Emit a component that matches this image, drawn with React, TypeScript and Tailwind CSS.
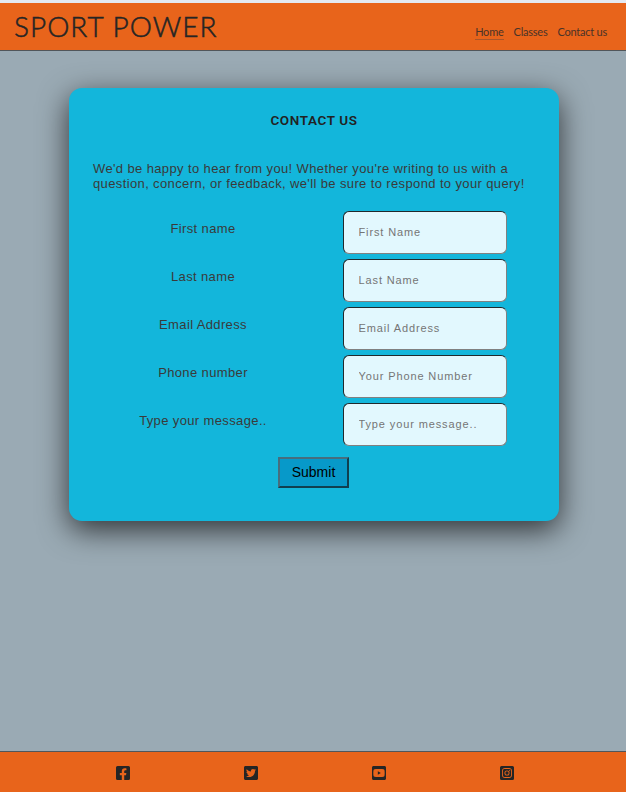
import { FaFacebookSquare, FaTwitterSquare, FaYoutubeSquare, FaInstagramSquare } from "react-icons/fa";

const fields = [
  { label: "First name", placeholder: "First Name", type: "text" },
  { label: "Last name", placeholder: "Last Name", type: "text" },
  { label: "Email Address", placeholder: "Email Address", type: "email" },
  { label: "Phone number", placeholder: "Your Phone Number", type: "tel" },
  { label: "Type your message..", placeholder: "Type your message..", type: "text" },
];

const socials = [FaFacebookSquare, FaTwitterSquare, FaYoutubeSquare, FaInstagramSquare];

export default function App() {
  return (
    <div className="flex h-[792px] w-[626px] flex-col overflow-hidden bg-[#9aaab4] font-['Liberation_Sans',sans-serif] text-[#3a3a3a]">
      <div className="h-[3px] shrink-0 bg-[#e4e9f1]" />
      <header className="flex h-[48px] shrink-0 justify-between border-b border-[#51565a] bg-[#e8641b] pl-[14px] pr-[19px] font-['Lato',sans-serif]">
        <h1 className="mt-[6px] text-[28px] font-light leading-[35px] tracking-[1px] text-[#252525] [-webkit-text-stroke:0.5px_#252525]">SPORT POWER</h1>
        <nav className="mt-[22px] flex items-start gap-[10px] text-[11px] leading-[14px] tracking-[-0.23px] text-[#4a3328]">
          <a className="border-b border-[#a8552a]">Home</a>
          <a>Classes</a>
          <a>Contact us</a>
        </nav>
      </header>
      <main className="flex grow flex-col pl-[69px] pt-[37px]">
        <form className="flex h-[433px] w-[490px] flex-col rounded-[13px] bg-[#13b6db] px-[24px] shadow-[0_9px_30px_rgba(0,0,0,0.7)]">
          <h2 className="mt-[25px] text-center font-['Roboto',sans-serif] text-[13.5px] font-semibold leading-[15px] tracking-[0.6px] text-[#222]">CONTACT US</h2>
          <p className="mt-[33px] whitespace-nowrap text-[13px] leading-[15px] tracking-[0.375px]">
            We'd be happy to hear from you! Whether you're writing to us with a<br />
            question, concern, or feedback, we'll be sure to respond to your query!
          </p>
          <div className="mt-[20px] flex flex-col gap-[5px]">
            {fields.map((f) => (
              <div key={f.label} className="flex h-[43px]">
                <label className="mt-[10px] w-[220px] text-center text-[13px] leading-[15px] tracking-[0.37px]">{f.label}</label>
                <div className="ml-[30px]">
                  <input
                    type={f.type}
                    placeholder={f.placeholder}
                    className="h-[43px] w-[164px] rounded-[6px] border border-b-[#808080] border-l-[#20292c] border-r-[#808080] border-t-[#20292c] bg-[#e2f8fe] px-[14.5px] pb-px text-[11px] tracking-[0.88px] placeholder:text-[#757575]"
                  />
                </div>
              </div>
            ))}
          </div>
          <button type="button" className="ml-[185px] mt-[11px] h-[31px] w-[71px] border-2 border-b-[#103f50] border-l-[#466e7e] border-r-[#103f50] border-t-[#466e7e] bg-[#0799c9] pb-[2px] text-[14px] leading-none text-black">Submit</button>
        </form>
      </main>
      <footer className="flex h-[41px] shrink-0 border-t border-[#51565a] bg-[#e8641b] pl-[58px] pr-[56px] pt-[13px]">
        {socials.map((Icon, i) => (
          <a key={i} className="flex w-[128px] shrink-0 justify-center pl-px">
            <Icon className="size-[16px] text-[#252525]" />
          </a>
        ))}
      </footer>
    </div>
  );
}
